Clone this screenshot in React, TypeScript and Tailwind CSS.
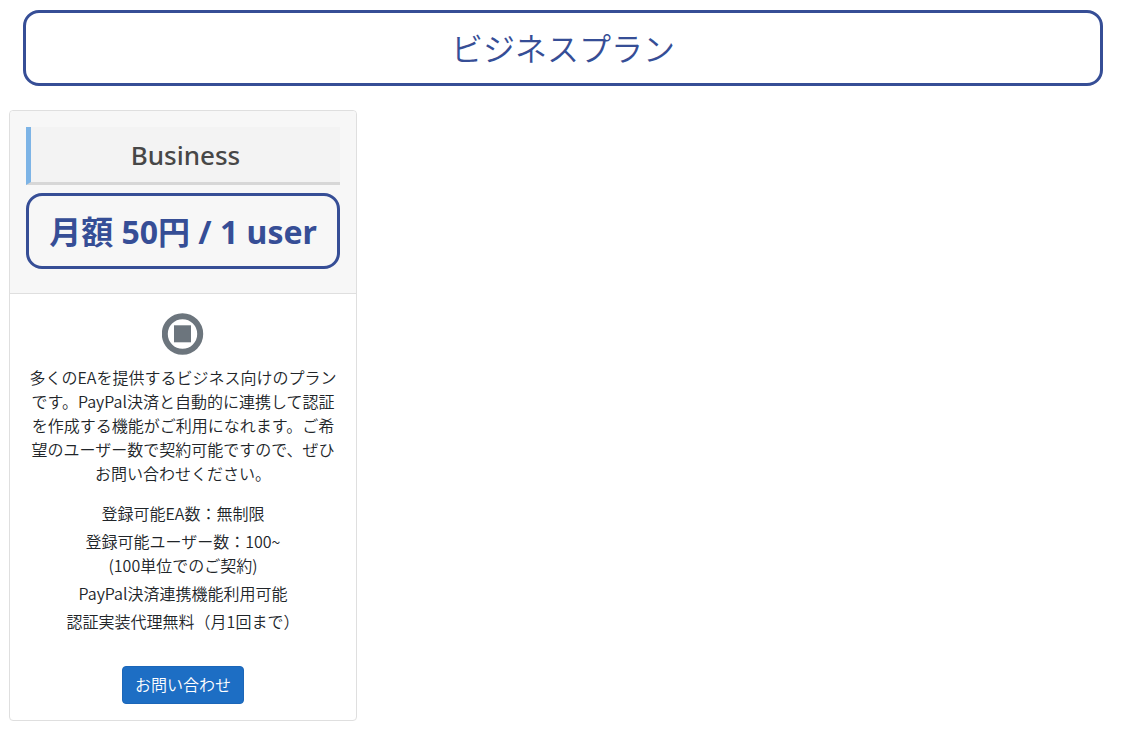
import React from "react";

const features = [
    ["登録可能EA数：無制限"],
    ["登録可能ユーザー数：100~", "(100単位でのご契約)"],
    ["PayPal決済連携機能利用可能"],
    ["認証実装代理無料（月1回まで）"],
];

function PlanIcon() {
    return (
        <svg className="mx-auto block" width="42" height="42" viewBox="0 0 42 42" aria-hidden="true">
            <circle cx="20.5" cy="21" r="17.7" fill="none" stroke="#6c757d" strokeWidth="6" />
            <rect x="12" y="12.3" width="17" height="17" fill="#6c757d" />
        </svg>
    );
}

function PlanCard() {
    return (
        <section className="w-[348px] max-w-full rounded border border-[#dfdfdf] bg-white text-center">
            <header className="rounded-t border-b border-[#dfdfdf] bg-[#f7f7f7] px-4 pt-4 pb-6 font-['Noto_Sans','Noto_Sans_CJK_JP',sans-serif]">
                <h2 className="border-b-3 border-l-5 border-b-[#d7d7d7] border-l-[#7db4e6] bg-[#f3f3f3] pt-[13px] pb-[11px] text-[26px] leading-[31px] font-medium text-[#474747]">
                    Business
                </h2>
                <p className="mt-2 rounded-2xl border-3 border-[#364e96] pt-[17px] pb-[15px] text-[32px] leading-[38px] font-bold whitespace-nowrap text-[#364e96]">
                    月額 50円 / 1 user
                </p>
            </header>
            <div className="px-4 pt-[19px] pb-4">
                <PlanIcon />
                <p className="mt-[10px]">
                    多くのEAを提供するビジネス向けのプランです。PayPal決済と自動的に連携して認証を作成する機能がご利用になれます。ご希望のユーザー数で契約可能ですので、ぜひお問い合わせください。
                </p>
                <ul className="mt-4 flex flex-col gap-1">
                    {features.map((lines) => (
                        <li key={lines[0]}>
                            {lines.map((line) => (
                                <span key={line} className="block">{line}</span>
                            ))}
                        </li>
                    ))}
                </ul>
                <button type="button" className="mt-[33px] rounded border border-[#1b66b8] bg-[#1d6ec4] px-3 pt-[5px] pb-[7px] text-white">
                    お問い合わせ
                </button>
            </div>
        </section>
    );
}

export default function App() {
    return (
        <main lang="ja" className="bg-white pt-[10px] pr-[30px] pb-4 pl-[9px] font-['Noto_Sans_CJK_JP',sans-serif] text-base leading-6 font-[350] text-[#212529]">
            <h1 className="mb-6 ml-[14px] rounded-2xl border-3 border-[#364e96] pt-[15px] pb-[17px] text-center text-[32px] leading-[38px] font-[350] text-[#364e96]">
                ビジネスプラン
            </h1>
            <PlanCard />
        </main>
    );
}
